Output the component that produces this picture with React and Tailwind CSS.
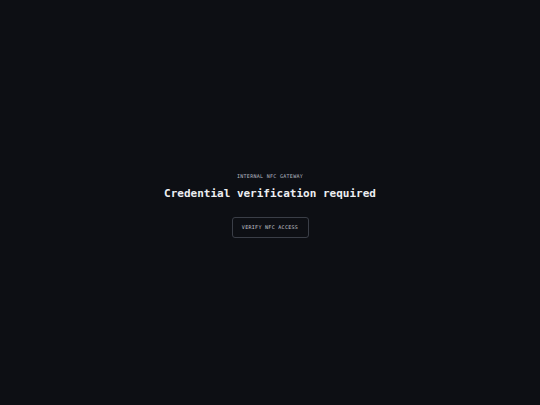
export default function App() {
  return (
    <div
      className="w-full h-[405px] bg-[#0d0f14] flex flex-col items-center justify-center pt-[6px]"
      style={{ fontFamily: '"DejaVu Sans Mono", "Liberation Mono", monospace' }}
    >
      <p className="text-[5px] tracking-[0.3px] text-[#b4b8c0] uppercase leading-none">
        Internal NFC Gateway
      </p>
      <h1 className="mt-[9px] text-[11px] font-bold text-[#eceef2] leading-none">
        Credential verification required
      </h1>
      <button className="mt-[18px] w-[77px] h-[21px] border border-[#3a3e47] rounded-[3px] text-[5px] tracking-[0.3px] text-[#c0c4cc] uppercase leading-none">
        Verify NFC Access
      </button>
    </div>
  );
}
